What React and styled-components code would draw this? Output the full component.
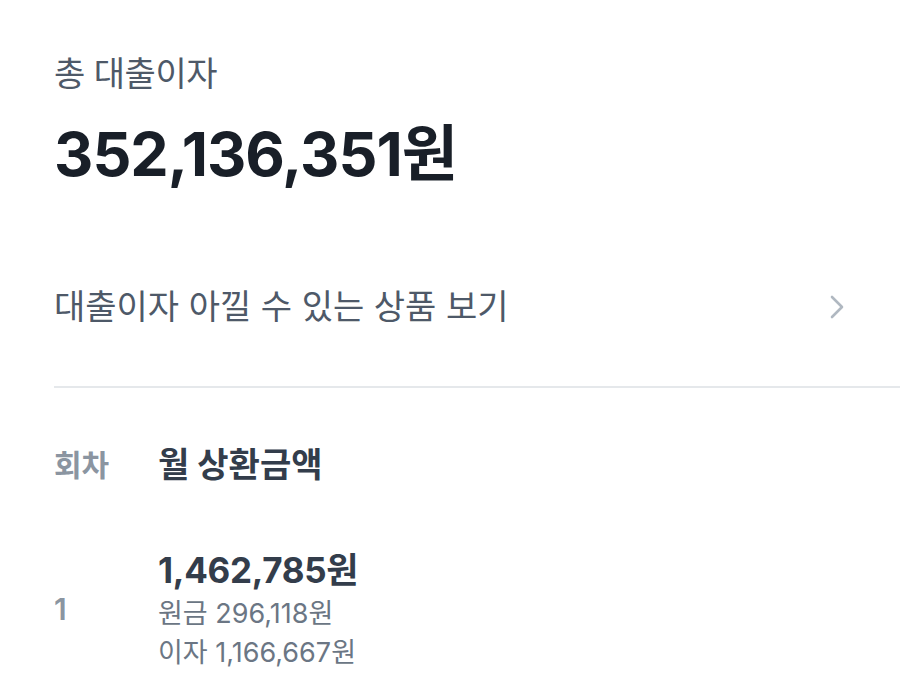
import React from "react";
import styled, { createGlobalStyle } from "styled-components";

const GlobalStyle = createGlobalStyle`
  html, body {
    margin: 0;
    padding: 0;
    background: #ffffff;
  }
  body {
    font-family: "Inter", "Noto Sans CJK KR", sans-serif;
    -webkit-font-smoothing: antialiased;
  }
`;

const Page = styled.div`
  width: 900px;
  padding: 50px 0 0 54px;
  box-sizing: border-box;
`;

const Summary = styled.section`
  display: flex;
  flex-direction: column;
  gap: 18px;
`;

const SummaryLabel = styled.div`
  font-size: 34px;
  line-height: 48px;
  color: #4e5968;
  letter-spacing: -0.5px;
`;

const SummaryValue = styled.div`
  font-size: 61px;
  line-height: 76px;
  font-weight: 700;
  color: #191f28;
  letter-spacing: -1px;
`;

const LinkRow = styled.button`
  display: flex;
  align-items: center;
  justify-content: space-between;
  width: 100%;
  margin-top: 91px;
  padding: 0 54px 0 0;
  border: none;
  background: none;
  font-family: inherit;
  font-size: 34px;
  line-height: 48px;
  color: #4e5968;
  cursor: pointer;
  text-align: left;
`;

const Divider = styled.hr`
  margin: 55px 0 0;
  border: none;
  height: 2px;
  background: #e5e8eb;
`;

const Table = styled.div`
  display: grid;
  grid-template-columns: 104px 1fr;
  margin-top: 55px;
  row-gap: 59px;
  align-items: center;
`;

const HeadCell = styled.div`
  font-size: ${(p) => (p.$main ? "34px" : "30px")};
  font-weight: 700;
  line-height: 44px;
  color: ${(p) => (p.$main ? "#333d4b" : "#8b95a1")};
`;

const Round = styled.div`
  font-size: 30px;
  font-weight: 600;
  color: #8b95a1;
`;

const Amounts = styled.div`
  display: flex;
  flex-direction: column;
`;

const Total = styled.div`
  font-size: 35px;
  line-height: 48px;
  font-weight: 700;
  color: #333d4b;
  letter-spacing: -0.3px;
`;

const Detail = styled.div`
  font-size: 27px;
  line-height: 39px;
  color: #6b7684;
`;

const Chevron = () => (
  <svg width="18" height="28" viewBox="0 0 18 28" fill="none">
    <path
      d="M4 4 L14 14 L4 24"
      stroke="#b0b8c1"
      strokeWidth="2.6"
      strokeLinecap="round"
      strokeLinejoin="round"
    />
  </svg>
);

const rows = [
  { round: 1, total: "1,462,785원", principal: "296,118원", interest: "1,166,667원" },
];

export default function App() {
  return (
    <>
      <GlobalStyle />
      <Page>
        <Summary>
          <SummaryLabel>총 대출이자</SummaryLabel>
          <SummaryValue>352,136,351원</SummaryValue>
        </Summary>

        <LinkRow>
          <span>대출이자 아낄 수 있는 상품 보기</span>
          <Chevron />
        </LinkRow>

        <Divider />

        <Table>
          <HeadCell>회차</HeadCell>
          <HeadCell $main>월 상환금액</HeadCell>
          {rows.map((r) => (
            <React.Fragment key={r.round}>
              <Round>{r.round}</Round>
              <Amounts>
                <Total>{r.total}</Total>
                <Detail>원금 {r.principal}</Detail>
                <Detail>이자 {r.interest}</Detail>
              </Amounts>
            </React.Fragment>
          ))}
        </Table>
      </Page>
    </>
  );
}
